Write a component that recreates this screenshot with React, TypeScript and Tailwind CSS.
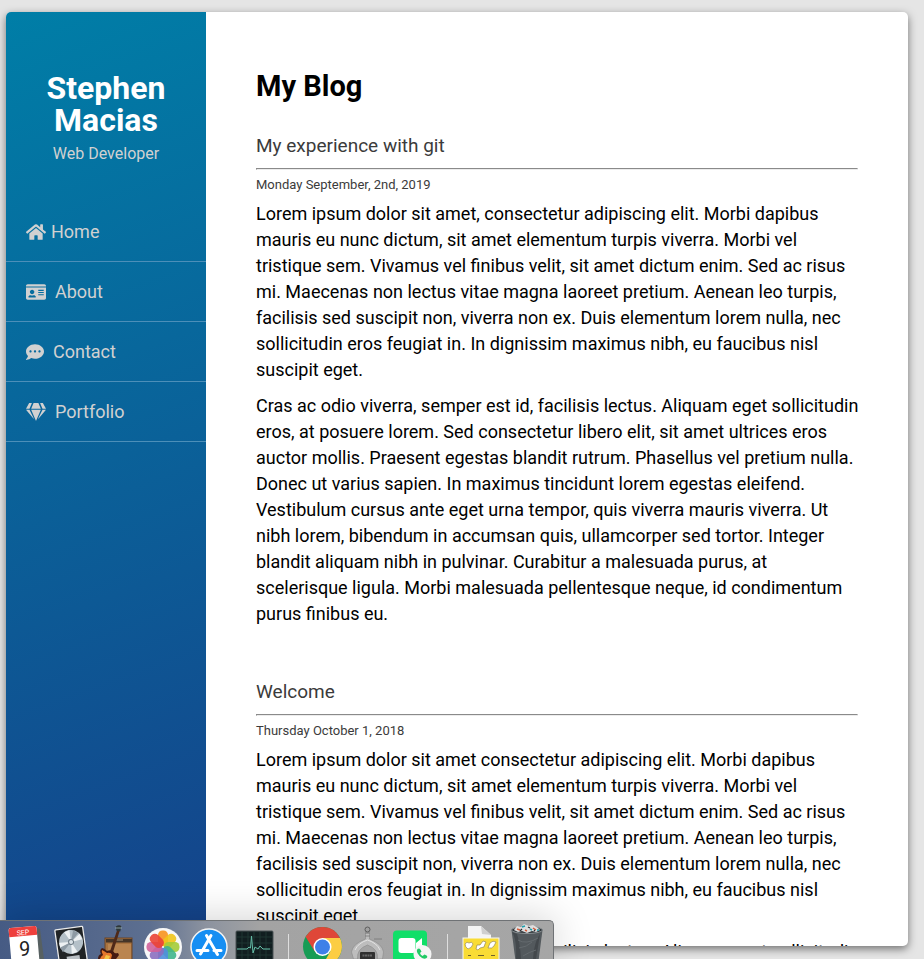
import type { ReactNode } from "react";
import { FaHome, FaIdCard, FaCommentDots, FaGem } from "react-icons/fa";

const navItems = [
  { label: "Home", icon: <FaHome className="h-[18px] w-5" />, gap: "gap-[5px]" },
  { label: "About", icon: <FaIdCard className="h-[18px] w-5" />, gap: "gap-[9px]" },
  { label: "Contact", icon: <FaCommentDots className="h-[18px] w-[18px]" />, gap: "gap-[9px]" },
  { label: "Portfolio", icon: <FaGem className="h-[18px] w-5" />, gap: "gap-[9px]" },
];

const loremTail =
  "consectetur adipiscing elit. Morbi dapibus mauris eu nunc dictum, sit amet elementum turpis viverra. Morbi vel tristique sem. Vivamus vel finibus velit, sit amet dictum enim. Sed ac risus mi. Maecenas non lectus vitae magna laoreet pretium. Aenean leo turpis, facilisis sed suscipit non, viverra non ex. Duis elementum lorem nulla, nec sollicitudin eros feugiat in. In dignissim maximus nibh, eu faucibus nisl suscipit eget.";

const cras =
  "Cras ac odio viverra, semper est id, facilisis lectus. Aliquam eget sollicitudin eros, at posuere lorem. Sed consectetur libero elit, sit amet ultrices eros auctor mollis. Praesent egestas blandit rutrum. Phasellus vel pretium nulla. Donec ut varius sapien. In maximus tincidunt lorem egestas eleifend. Vestibulum cursus ante eget urna tempor, quis viverra mauris viverra. Ut nibh lorem, bibendum in accumsan quis, ullamcorper sed tortor. Integer blandit aliquam nibh in pulvinar. Curabitur a malesuada purus, at scelerisque ligula. Morbi malesuada pellentesque neque, id condimentum purus finibus eu.";

const posts = [
  {
    title: "My experience with git",
    date: "Monday September, 2nd, 2019",
    paragraphs: ["Lorem ipsum dolor sit amet, " + loremTail, cras],
  },
  {
    title: "Welcome",
    date: "Thursday October 1, 2018",
    paragraphs: ["Lorem ipsum dolor sit amet " + loremTail, cras],
  },
];

function Sidebar() {
  return (
    <aside className="w-[200px] shrink-0 bg-linear-[160deg,#007ea7_0%,#15428a_100%] text-[#d1d1d1]">
      <header className="px-5 pt-[60px] text-center">
        <h1 className="text-[32px] leading-8 font-bold text-white">Stephen Macias</h1>
        <p className="mt-[5px] text-base leading-[26px]">Web Developer</p>
      </header>
      <nav className="mt-[35px]">
        <ul>
          {navItems.map((item) => (
            <li key={item.label} className="border-b border-[#4c8fb9]">
              <a href="#" className={`flex h-[59px] items-center px-5 text-lg ${item.gap}`}>
                {item.icon}
                {item.label}
              </a>
            </li>
          ))}
        </ul>
      </nav>
    </aside>
  );
}

function DockItem({ label, children }: { label: string; children: ReactNode }) {
  return (
    <button type="button" aria-label={label} className="h-[38px] w-[46px] shrink-0">
      <svg viewBox="0 0 46 38" className="h-full w-full">
        {children}
      </svg>
    </button>
  );
}

function Divider() {
  return <span className="mx-[10px] mt-[13px] h-[25px] w-px shrink-0 bg-[#dedede]" />;
}

const petals = [
  ["0", "#f7941e"],
  ["45", "#f0c419"],
  ["90", "#a3cb38"],
  ["135", "#3fb58c"],
  ["180", "#4f8fdc"],
  ["225", "#8b6fc0"],
  ["270", "#d0609a"],
  ["315", "#ea4335"],
];

function Dock() {
  return (
    <div className="absolute bottom-0 left-0 flex h-[39px] w-[554px] overflow-hidden rounded-tr-[5px] border-t border-r border-[#6f7275] bg-linear-[90deg,#465b84_0,#5d6f90_150px,#8b929f_205px,#a3a3a3_260px,#a6a6a6_100%] pl-[2px] shadow-[0_0_40px_rgba(0,0,0,0.2)]">
      <DockItem label="Calendar">
        <path d="M35 7l3 1 4 30h-6z" fill="#576061" />
        <g transform="rotate(-5 22 24)">
          <path d="M8 8q0-2 2-2h24q2 0 2 2v34H8z" fill="#fff" />
          <path d="M8 8q0-2 2-2h24q2 0 2 2v7H8z" fill="#ee3f3c" />
        </g>
        <text x="21" y="14" textAnchor="middle" fontSize="7" fontFamily="Roboto, sans-serif" fill="#fff" transform="rotate(-5 21 12)">SEP</text>
        <text x="22.500" y="35" textAnchor="middle" fontSize="20" fontFamily="Roboto, sans-serif" fill="#222">9</text>
      </DockItem>
      <DockItem label="Logic Pro">
        <g transform="rotate(-8 23 24)">
          <rect x="9" y="7" width="28" height="40" rx="1" fill="#202325" stroke="#e9e9e9" strokeWidth="1.300" />
          <circle cx="23.500" cy="21" r="12" fill="#b4c0c8" />
          <path d="M23.500 21L18 10.500l5.500-1.500zM23.500 21L33 14l2 6zM23.500 21l5 10.500-6 1.500zM23.500 21L12 26l-.5-6z" fill="#edf1f3" />
          <path d="M23.500 21L27 10l5 3zM23.500 21L14 30l-2-5z" fill="#8d9aa4" />
          <circle cx="23.500" cy="21" r="2.500" fill="#d9e1e6" stroke="#6e7b85" />
          <rect x="17" y="35" width="13" height="6" fill="#b9bfc4" />
        </g>
      </DockItem>
      <DockItem label="GarageBand">
        <rect x="11" y="17" width="27" height="24" fill="#a9733f" stroke="#6b4526" />
        <path d="M12 18h26v3.500H12z" fill="#453528" />
        <path d="M20 19h9" stroke="#b9a88a" strokeWidth="0.800" />
        <path d="M14 23h23v15H14z" fill="#ba8550" />
        <path d="M23.500 8l2.500.8-7.500 24-3-1z" fill="#4f2918" />
        <path d="M21.800 5.500q3-2 5.500-.5l-1 5.500-4-1z" fill="#2d3638" />
        <path d="M21 7h7" stroke="#8aa0a3" />
        <path d="M4 38q0-4 3-5-2-4 1-6 2 0 5 3 4-2 7 1 0 2 4 1l1 2-3 4z" fill="#451a12" />
        <path d="M6 38q1-3 3-4-2-3-1-5 2 1 5 3 4-1 5 2l-1 4z" fill="#e5772c" />
        <path d="M10 38l2-4 4 1-1 3z" fill="#f4c244" />
      </DockItem>
      <DockItem label="Photos">
        <circle cx="23" cy="26" r="19" fill="#f8f8f8" />
        {petals.map(([angle, color]) => (
          <rect key={angle} x="18" y="9.500" width="10" height="15.500" rx="4.500" fill={color} fillOpacity="0.9" transform={`rotate(${angle} 23 26)`} />
        ))}
      </DockItem>
      <DockItem label="App Store">
        <circle cx="23" cy="26" r="18" fill="#168ef2" stroke="#f4f4f4" strokeWidth="1.500" />
        <path d="M25 14.500L14.500 33M20.500 14.500l11 19M11 29.500h11M28 29.500h7" fill="none" stroke="#fff" strokeWidth="3" strokeLinecap="round" />
      </DockItem>
      <DockItem label="Activity Monitor">
        <rect x="4" y="10" width="37" height="32" rx="1" fill="#111e20" stroke="#4b5354" />
        <path d="M10 11v27M16 11v27M22 11v27M28 11v27M34 11v27M5 16h35M5 22h35M5 28h35M5 34h35" stroke="#223a36" strokeWidth="0.800" />
        <path d="M5 28h10l2-2 1.500 1L19.500 15l1.500 17 2-6 3 2 2-3 3 3h7" fill="none" stroke="#65bda7" />
      </DockItem>
      <Divider />
      <DockItem label="Google Chrome">
        <circle cx="23.500" cy="25.500" r="19.500" fill="#179c55" />
        <path d="M23.500 17H41A19.500 19.500 0 0 1 23 45L31.300 30.500z" fill="#fccd43" />
        <path d="M6.600 15.800A19.500 19.500 0 0 1 41 17H23.500L15.700 30.500z" fill="#df4738" />
        <circle cx="23.500" cy="26" r="9" fill="#fff" />
        <circle cx="23.500" cy="26" r="7.500" fill="#3f80e8" />
      </DockItem>
      <DockItem label="System Information">
        <path d="M20.500 12h4v6q13 5 14 13l-1 7h-5q1-10-10-14-11 4-10 14h-4l-2-7q1-8 14-13z" fill="#bdbdbd" stroke="#8a8a8a" strokeWidth="0.600" />
        <path d="M10 29q3-7 12.500-10Q32 22 35 29" fill="none" stroke="#e4e4e4" />
        <circle cx="22.500" cy="8.500" r="2.500" fill="#a0a0a0" stroke="#5c5c5c" />
        <path d="M20 12h5M20 15h5M29 18h8" stroke="#777" strokeWidth="0.800" />
        <rect x="15" y="31" width="15" height="9" rx="1" fill="#303030" />
        <path d="M17.500 34.500h10" stroke="#666" strokeWidth="2" strokeDasharray="2 0.500" />
      </DockItem>
      <DockItem label="FaceTime">
        <rect x="2" y="9.500" width="34" height="32" rx="4" fill="#10df68" />
        <rect x="7.500" y="17" width="17" height="15" rx="3" fill="#fff" />
        <path d="M25 22l6-5v15l-6-4z" fill="#fff" />
        <circle cx="31.500" cy="33" r="9" fill="#f5f5f5" />
        <path d="M26.500 28q-2 3 2 7 4 4 7 2 1.500-1.500 0-2.500l-2-1-2 1.500q-2-1-2.500-3l1.500-1.500-1.500-2.500q-1-1-2.500 0z" fill="#21ca65" />
      </DockItem>
      <Divider />
      <DockItem label="Downloads">
        <path d="M10 5h13l10 9v5H10z" fill="#f4f4f4" />
        <path d="M23 5l1 8 9 1z" fill="#cfcfcf" />
        <rect x="5" y="17" width="36" height="25" fill="#f9dc35" stroke="#f5f5f5" />
        <path d="M7 23q2-3 4-1 3-2 4 1-1 4-5 5-3-2-3-5zM18 28l1-4 3 0 3-4 3 1-1 2-1 3-4 1-2 2zM30 27l2-5q3-3 6-1l-2 4q-2 3-6 2z" fill="#fff" stroke="#85794a" strokeWidth="0.600" />
        <path d="M10 34.500h3M20 34.500h6M33 34.500h4" stroke="#6f622c" />
      </DockItem>
      <DockItem label="Trash">
        <path d="M7.500 9h31l-4 31h-23z" fill="#53595d" />
        <path d="M8 11q5 7 4 27h5q-1-17-4-25zM36 13q-6 8-7 25h3z" fill="#43484c" />
        <path d="M14 19q8 5 20-2M15 27q8-1 13-6M19 35q6-4 13-6" fill="none" stroke="#646a6e" />
        <ellipse cx="23" cy="9" rx="15.500" ry="3.500" fill="#30363a" stroke="#899094" />
        <path d="M10 9l3-4 4 1 3-3 5 2 4-1 5 3 2 2-4 2-4-1-5 2-5-2-4 1z" fill="#dedede" />
        <path d="M13 8l3 1M21 9l2 1M29 7l3 2" stroke="#d25c3c" strokeWidth="1.500" />
        <path d="M18 6l3-1M26 8l2 1M33 9l2 0" stroke="#1c9fad" strokeWidth="1.500" />
        <path d="M16 10l2-2M24 6l2 1M30 10l1-1" stroke="#2b2f33" strokeWidth="1.200" />
      </DockItem>
    </div>
  );
}

export default function App() {
  return (
    <div className="relative h-screen overflow-hidden bg-[#e5e5e5] pt-3 pr-4 pb-[13px] pl-[6px] font-[Roboto,sans-serif]">
      <div className="flex h-full overflow-hidden rounded-[5px] bg-white shadow-[0_3px_8px_rgba(0,0,0,0.5)]">
        <Sidebar />
        <main className="min-w-0 flex-1 pt-[58px] pr-12 pl-[50px] text-black">
          <h2 className="mb-[31px] text-[29px] leading-8 font-bold">My Blog</h2>
          {posts.map((post) => (
            <article key={post.title} className="pb-[42px]">
              <h3 className="text-[19px] leading-[26px] text-[#3b3b3b]">{post.title}</h3>
              <hr className="mt-[9px] mr-[2px] mb-[5px] border border-t-[#8a8a8a] border-r-[#ececec] border-b-[#ececec] border-l-[#8a8a8a]" />
              <p className="mb-[6px] text-[13px] leading-5 text-[#3b3b3b]">{post.date}</p>
              {post.paragraphs.map((text) => (
                <p key={text} className="mb-[10px] text-lg leading-[26px]">{text}</p>
              ))}
            </article>
          ))}
        </main>
      </div>
      <Dock />
    </div>
  );
}
